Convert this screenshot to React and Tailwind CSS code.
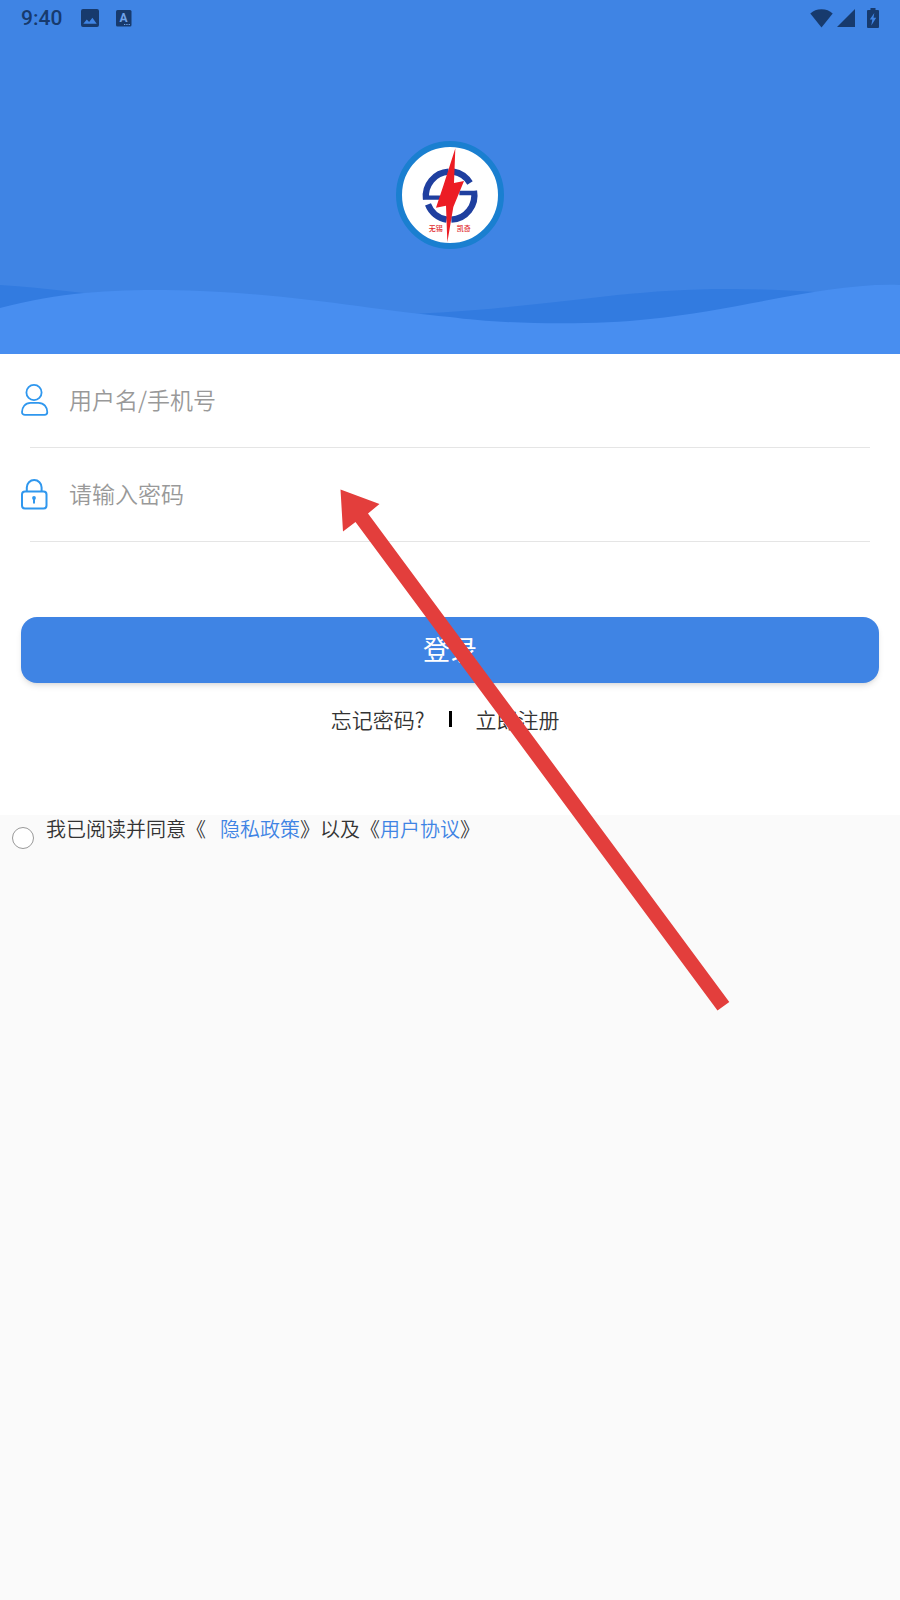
import React, { useState } from 'react';

const LINK = 'text-[#3f84e4]';

function StatusBar() {
  return (
    <div className="flex items-center justify-between px-[21px] h-9 text-[#173a6d]">
      <div className="flex items-center">
        <span className="w-[60px] font-['Roboto'] font-medium text-[21px] leading-6">9:40</span>
        <svg viewBox="0 0 18 18" className="w-[18px] h-[18px]" fill="currentColor">
          <path fillRule="evenodd" d="M2 0h14a2 2 0 0 1 2 2v14a2 2 0 0 1-2 2H2a2 2 0 0 1-2-2V2a2 2 0 0 1 2-2zM2.300 14.800h13.400l-4.300-6-3.300 4.300-2.300-2.700z" />
        </svg>
        <svg viewBox="0 0 16 17" className="ml-[17px] w-4 h-[17px]">
          <rect width="15.500" height="16.500" rx="1.500" fill="#173a6d" />
          <text x="7.500" y="12" textAnchor="middle" fill="#6fa3ea" fontFamily="Roboto, sans-serif" fontSize="12" fontWeight="700">A</text>
          <path d="M8 14.500h1.300M10.300 14.500h1.300M12.600 14.500h1.300" stroke="#6fa3ea" strokeWidth="1" />
        </svg>
      </div>
      <div className="flex items-center">
        <svg viewBox="0 0 23 19" className="w-[23px] h-[19px]" fill="currentColor">
          <path d="M11.500 18.500L0.300 4.600C3.200 1.800 7 .3 11.500 .3s8.300 1.500 11.200 4.300z" />
        </svg>
        <svg viewBox="0 0 18 18" className="ml-1 w-[18px] h-[18px]" fill="currentColor">
          <path d="M18 0v18H0z" />
        </svg>
        <svg viewBox="0 0 12 20" className="ml-3 w-3 h-5" fill="currentColor">
          <path fillRule="evenodd" d="M3.500 0h5v2H11a1 1 0 0 1 1 1v16a1 1 0 0 1-1 1H1a1 1 0 0 1-1-1V3a1 1 0 0 1 1-1h2.500zM7.300 5L2.800 11.500h2.500L4.300 17.500 9.200 9.800H6.500z" />
        </svg>
      </div>
    </div>
  );
}

function Logo() {
  return (
    <div className="w-[108px] h-[108px] rounded-full border-6 border-[#1a7fd0] bg-white">
      <svg viewBox="36 36 288 288" className="w-24 h-24">
        <g fill="none" stroke="#1f3f9f" strokeWidth="19">
          <path d="M108 192A73 73 0 0 1 176 110M190 110A73 73 0 0 1 240 144" />
          <path d="M252 168A73 73 0 0 1 184 254M170 254A73 73 0 0 1 114 208" />
          <path d="M99 188H150M208 174H261" strokeWidth="13" />
        </g>
        <path d="M196 40L192 144L222 138L190 216L172 322L168 212L138 218L160 152z" fill="#ec1c24" />
        <g fill="#e0282c" fontFamily="'Noto Sans CJK SC', sans-serif" fontSize="21" fontWeight="500">
          <text x="116" y="287">无锡</text>
          <text x="200" y="287">凯奇</text>
        </g>
      </svg>
    </div>
  );
}

function Waves() {
  return (
    <svg viewBox="0 0 900 72" preserveAspectRatio="none" className="block w-full h-[72px]">
      <path d="M0 3C150 13 240 44 430 31C560 24 620 7 730 7C800 7 860 14 900 16V72H0z" fill="#327be0" />
      <path d="M0 26C60 10 110 8 165 8C280 9 370 28 450 35C500 42 590 44 650 37C740 28 830 0 900 3V72H0z" fill="#488ef0" />
    </svg>
  );
}

function UserIcon() {
  return (
    <svg viewBox="0 0 28 32" className="w-7 h-8" fill="none" stroke="#2f97ee" strokeWidth="1.800">
      <circle cx="13" cy="8.500" r="7.600" />
      <path d="M9.500 18.800H17.500C23 18.800 26.300 23.500 26.300 28C26.300 30 25.200 30.900 23.500 30.900H4C2.200 30.900 1 30 1 28C1 23.500 4 18.800 9.500 18.800z" />
    </svg>
  );
}

function LockIcon() {
  return (
    <svg viewBox="0 0 28 32" className="w-7 h-8" fill="none" stroke="#2f97ee" strokeWidth="2">
      <rect x="1" y="13.500" width="24.500" height="17" rx="3" />
      <path d="M5.800 13.500V9.500a7.400 7.400 0 0 1 14.800 0v4" />
      <circle cx="13" cy="20" r="1.900" fill="#2f97ee" stroke="none" />
      <path d="M13 20v5.500" />
    </svg>
  );
}

function Field({ id, label, type, icon, value, onChange }) {
  return (
    <div>
      <div className="flex items-center h-[93px] px-[21px] pb-px">
        <label htmlFor={id} aria-label={label}>{icon}</label>
        <input
          id={id}
          type={type}
          value={value}
          placeholder={label}
          onChange={e => onChange(e.target.value)}
          className="flex-1 ml-5 pb-0.5 text-[23px] leading-8 font-[350] text-gray-800 placeholder:text-[#999] outline-none bg-transparent"
        />
      </div>
      <div className="mx-[30px] h-px bg-[#e5e5e5]" />
    </div>
  );
}

export default function App() {
  const [username, setUsername] = useState('');
  const [password, setPassword] = useState('');
  const [agreed, setAgreed] = useState(false);

  return (
    <div className="relative min-h-screen bg-[#fafafa] font-['Noto_Sans_CJK_SC',sans-serif] font-[350] text-[#333]">
      <header className="bg-[#3f84e4]">
        <StatusBar />
        <div className="flex justify-center pt-[105px] pb-[33px]">
          <Logo />
        </div>
        <Waves />
      </header>

      <form className="bg-white pb-20" onSubmit={e => e.preventDefault()}>
        <Field id="username" label="用户名/手机号" type="text" icon={<UserIcon />} value={username} onChange={setUsername} />
        <Field id="password" label="请输入密码" type="password" icon={<LockIcon />} value={password} onChange={setPassword} />

        <div className="px-[21px] pt-[75px]">
          <button type="submit" className="w-full h-[66px] pb-0.5 rounded-2xl bg-[#3f84e4] text-white text-[27px] leading-10 font-normal shadow-md">
            登录
          </button>
        </div>

        <div className="flex items-center pt-5 text-[21px] leading-8">
          <a href="#forgot" className="flex-1 text-right pr-6">忘记密码?</a>
          <span className="w-[3px] h-4 bg-black" />
          <a href="#register" className="flex-1 pl-6">立即注册</a>
        </div>
      </form>

      <div className="flex items-start pl-3 text-xl leading-7">
        <input
          id="agree"
          type="checkbox"
          checked={agreed}
          onChange={e => setAgreed(e.target.checked)}
          className="appearance-none mt-3 w-[22px] h-[22px] rounded-full border border-[#999] bg-white checked:bg-[#3f84e4]"
        />
        <div className="flex ml-3">
          <label htmlFor="agree" className="mr-3.5">我已阅读并同意《</label>
          <a href="#privacy" className={LINK}>隐私政策</a>
          <span>》以及《</span>
          <a href="#terms" className={LINK}>用户协议</a>
          <span>》</span>
        </div>
      </div>

      {/* Pointer to the password field */}
      <svg viewBox="340 489 390 522" className="absolute left-[340px] top-[489px] w-[390px] h-[522px] pointer-events-none">
        <path d="M340.500 489.500L379.500 504L368 513.500L729.300 1002L717.500 1010.500L355.500 522L343 531.500z" fill="#e33e3c" />
      </svg>
    </div>
  );
}
